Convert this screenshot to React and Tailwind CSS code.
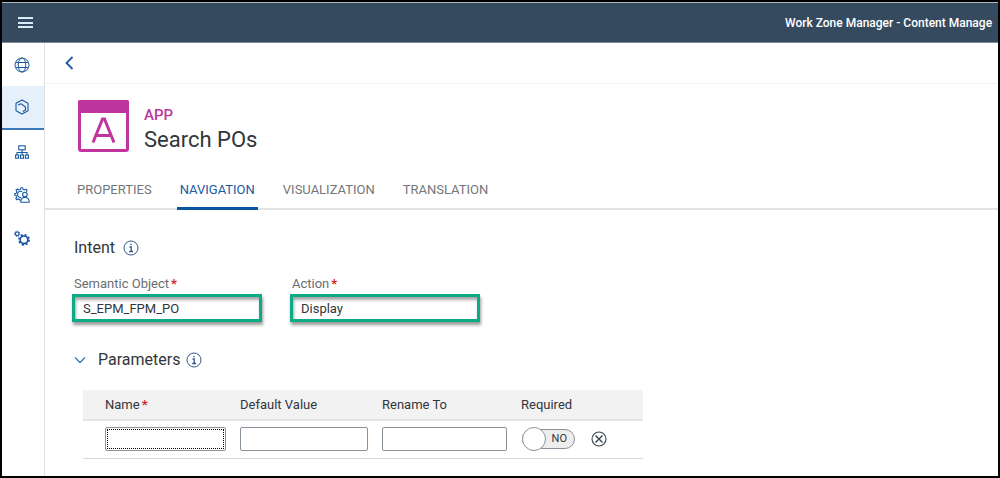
import React, { useState } from "react";

function MenuIcon() {
  return (
    <svg width="15" height="13" viewBox="0 0 15 13" fill="#d9edf7" aria-hidden="true">
      <rect y="1" width="15" height="2" />
      <rect y="6" width="15" height="2" />
      <rect y="10" width="15" height="2" />
    </svg>
  );
}

function GlobeIcon() {
  return (
    <svg width="16" height="16" viewBox="0 0 16 16" fill="none" stroke="#1b5aa3" strokeWidth="1" aria-hidden="true">
      <circle cx="8" cy="8" r="7" />
      <ellipse cx="8" cy="8" rx="3.8" ry="7" />
      <path d="M1.8 5.5h12.4M1.8 10.500h12.4" />
    </svg>
  );
}

function ProductIcon() {
  return (
    <svg width="16" height="16" viewBox="0 0 16 16" fill="none" stroke="#1b5aa3" strokeWidth="1.1" strokeLinejoin="round" aria-hidden="true">
      <path d="M8 1l6 3.3v7.4L8 15l-6-3.3V4.3z" />
      <path d="M4 6l3-1.200L11.500 8v3L8.800 12.500" />
    </svg>
  );
}

function OrgIcon() {
  return (
    <svg width="16" height="16" viewBox="0 0 16 16" fill="none" stroke="#1b5aa3" strokeWidth="1.1" aria-hidden="true">
      <rect x="4.8" y="1.8" width="6.4" height="4" />
      <path d="M8 5.8v5M3 11V8.5h10V11" />
      <rect x="1.6" y="11" width="3" height="3.2" />
      <rect x="6.5" y="11" width="3" height="3.2" />
      <rect x="11.4" y="11" width="3" height="3.2" />
    </svg>
  );
}

function UserSettingsIcon() {
  return (
    <svg width="16" height="16" viewBox="0 0 16 16" fill="none" stroke="#1b5aa3" strokeWidth="1.1" aria-hidden="true">
      <path d="M6.3 14.2l-.4-1.6-1.6-.7-1.5.8-1-1.3.9-1.4-.6-1.6L.7 8V6.600l1.500-.4.700-1.600-.8-1.500 1.300-1.100 1.500.9 1.500-.6L6.900.7h1.700l.4 1.600 1.500.6 1.500-.8 1.100 1.200-.8 1.400" />
      <path d="M8.200 4.600a3.200 3.200 0 1 0-1 6" />
      <circle cx="10.900" cy="7.600" r="2.300" />
      <path d="M6.800 15.200c0-3.400 1.700-4.700 4.100-4.700s4.300 1.300 4.300 4.700z" />
    </svg>
  );
}

function GearsIcon() {
  return (
    <svg width="16" height="16" viewBox="0 0 16 16" fill="none" stroke="#0f4f9b" aria-hidden="true">
      <circle cx="3.200" cy="3.800" r="1.800" strokeWidth="1.100" />
      <circle cx="3.200" cy="3.800" r="2.700" strokeWidth="0.900" strokeDasharray="1.060 1.060" />
      <circle cx="10" cy="9.800" r="3.800" strokeWidth="1.600" />
      <circle cx="10" cy="9.800" r="5.100" strokeWidth="1.600" strokeDasharray="2 2.005" />
    </svg>
  );
}

function InfoIcon() {
  return (
    <svg width="16" height="16" viewBox="0 0 16 16" fill="none" stroke="#31568a" strokeWidth="1" aria-hidden="true">
      <circle cx="8" cy="8" r="7" />
      <path d="M6.500 7H8.200v4.500M6.200 11.500h3.800" strokeWidth="1.300" />
      <rect x="7.300" y="3.800" width="1.400" height="1.400" fill="#31568a" stroke="none" />
    </svg>
  );
}

function AppTile() {
  return (
    <svg width="51" height="52" viewBox="0 0 51 52" aria-hidden="true">
      <rect x="1.500" y="1.500" width="48" height="49" rx="1.500" fill="#fff" stroke="#bf359e" strokeWidth="3" />
      <rect width="51" height="13" rx="2" fill="#bf359e" />
      <path d="M15 42.500L24.500 19h2L36 42.500M18 35.500h15" fill="none" stroke="#bf359e" strokeWidth="3" />
    </svg>
  );
}

const navItems = [
  { label: "Sites", icon: <GlobeIcon /> },
  { label: "Content", icon: <ProductIcon />, active: true },
  { label: "Channels", icon: <OrgIcon /> },
  { label: "User settings", icon: <UserSettingsIcon /> },
  { label: "Settings", icon: <GearsIcon /> },
];

const tabs = ["PROPERTIES", "NAVIGATION", "VISUALIZATION", "TRANSLATION"];

function Star() {
  return <span className="ml-0.5 font-bold text-[#d0242c]">*</span>;
}

function Field({ id, label, value }) {
  return (
    <div className="w-[190px]">
      <label htmlFor={id} className="block pl-0.5 text-[13px] leading-5 text-[#6a6d70]">
        {label}
        <Star />
      </label>
      <input
        id={id}
        defaultValue={value}
        className="block h-7 w-full border-[3px] border-[#0cab86] bg-white px-2 text-[13px] text-[#32363a] shadow-[1px_3px_3px_rgba(0,0,0,0.4),inset_1px_3px_3px_rgba(0,0,0,0.35)] outline-none"
      />
    </div>
  );
}

function CellInput({ label, focused }) {
  return (
    <input
      aria-label={label}
      className={
        focused
          ? "block h-6 w-full rounded-xs border border-[#89919a] bg-white outline-1 -outline-offset-3 outline-dotted outline-black"
          : "block h-6 w-full rounded-xs border border-[#89919a] bg-white outline-none"
      }
    />
  );
}

export default function App() {
  const [tab, setTab] = useState("NAVIGATION");
  const [required, setRequired] = useState(false);

  return (
    <div className="flex min-h-screen flex-col border-2 border-black bg-white font-['Roboto','Liberation_Sans',sans-serif] text-[#32363a]">
      <header className="flex h-[41px] items-center justify-between border-t border-b border-t-[#b3bac2] border-b-[#7b8b9b] bg-[#354a5f] pl-4">
        <button aria-label="Menu">
          <MenuIcon />
        </button>
        <h1 className="w-[213px] text-xs font-medium whitespace-nowrap text-white">
          Work Zone Manager - Content Manage
        </h1>
      </header>

      <div className="flex flex-1">
        <nav className="w-[43px] shrink-0 border-r border-[#dfe1e4]">
          {navItems.map((item) => (
            <a
              key={item.label}
              href="#"
              aria-label={item.label}
              className={
                item.active
                  ? "flex h-11 items-center justify-center border-b-2 border-[#3c78b8] bg-[#e5f0fa] pr-0.5"
                  : "flex h-[43px] items-center justify-center pr-0.5"
              }
            >
              {item.icon}
            </a>
          ))}
        </nav>

        <main className="min-w-0 flex-1">
          <div className="flex h-[41px] items-center border-b border-[#f3f3f3] pl-5">
            <button aria-label="Back">
              <svg width="9" height="14" viewBox="0 0 9 14" fill="none" stroke="#1b5aa3" strokeWidth="1.800" aria-hidden="true">
                <path d="M7.500 1L1.500 7l6 6" />
              </svg>
            </button>
          </div>

          <div className="flex items-start gap-[15px] pt-4 pl-[33px]">
            <AppTile />
            <div className="pt-[5px]">
              <p className="text-[15px] leading-5 font-medium text-[#bf359e]">APP</p>
              <h2 className="text-[22px] leading-[30px]">Search POs</h2>
            </div>
          </div>

          <div role="tablist" className="mt-4 flex gap-[22px] border-b-2 border-[#e2e3e4] pl-[29px] text-[13px]">
            {tabs.map((name) => (
              <button
                key={name}
                role="tab"
                aria-selected={tab === name}
                onClick={() => setTab(name)}
                className={
                  tab === name
                    ? "-mb-0.5 h-[39px] border-b-3 border-[#0854a0] px-[3px] pt-0.5 text-[#1b5aa3]"
                    : "-mb-0.5 h-[39px] border-b-3 border-transparent px-[3px] pt-0.5 text-[#74777a]"
                }
              >
                {name}
              </button>
            ))}
          </div>

          <section className="pt-[26px] pl-[27px]">
            <h3 className="flex items-center gap-2 pl-0.5 text-base leading-6">
              Intent
              <InfoIcon />
            </h3>
            <div className="mt-3.5 flex gap-7">
              <Field id="semantic-object" label="Semantic Object" value="S_EPM_FPM_PO" />
              <Field id="action" label="Action" value="Display" />
            </div>
          </section>

          <section className="pt-[26px] pl-[29px]">
            <h3 className="flex items-center text-base leading-6">
              <button aria-label="Collapse parameters" className="mr-3">
                <svg width="12" height="8" viewBox="0 0 12 8" fill="none" stroke="#3b78b5" strokeWidth="1.300" aria-hidden="true">
                  <path d="M1 1.500l5 5 5-5" />
                </svg>
              </button>
              Parameters
              <span className="ml-1.5">
                <InfoIcon />
              </span>
            </h3>
            <table className="mt-[18px] ml-[9px] w-[560px] table-fixed border-collapse text-left text-[13px]">
              <colgroup>
                <col className="w-[150px]" />
                <col className="w-[141px]" />
                <col className="w-[139px]" />
                <col className="w-[62px]" />
                <col />
              </colgroup>
              <thead>
                <tr className="h-[30px] border-b-2 border-[#e5e5e5] bg-[#f2f2f2]">
                  <th className="pl-[22px] font-normal">
                    Name
                    <Star />
                  </th>
                  <th className="pl-[7px] font-normal">Default Value</th>
                  <th className="pl-2 font-normal">Rename To</th>
                  <th className="pl-2 font-normal">Required</th>
                  <th aria-label="Remove" />
                </tr>
              </thead>
              <tbody>
                <tr className="h-[38px] border-b border-[#d9d9d9]">
                  <td className="pr-[7px] pl-[22px]">
                    <CellInput label="Name" focused />
                  </td>
                  <td className="pr-[6px] pl-[7px]">
                    <CellInput label="Default Value" />
                  </td>
                  <td className="pr-[6px] pl-2">
                    <CellInput label="Rename To" />
                  </td>
                  <td className="pl-[9px]">
                    <label className="relative flex h-6 w-[53px] items-center">
                      <input
                        type="checkbox"
                        role="switch"
                        aria-label="Required"
                        checked={required}
                        onChange={() => setRequired(!required)}
                        className="peer absolute inset-0 m-0 appearance-none"
                      />
                      <span className="flex h-5 w-full items-center justify-end rounded-full border border-[#89919a] bg-[#ededed] pr-[7px] text-[11px] peer-checked:justify-start peer-checked:pl-2">
                        {required ? "YES" : "NO"}
                      </span>
                      <span className="absolute top-0 left-0 size-6 rounded-full border border-[#89919a] bg-white peer-checked:right-0 peer-checked:left-auto" />
                    </label>
                  </td>
                  <td className="pl-4">
                    <button aria-label="Delete parameter" className="block">
                      <svg width="16" height="16" viewBox="0 0 16 16" fill="none" stroke="#32444f" strokeWidth="1.100" aria-hidden="true">
                        <circle cx="8" cy="8" r="7" />
                        <path d="M4.500 4.500l7 7M11.500 4.500l-7 7" strokeWidth="1.400" />
                      </svg>
                    </button>
                  </td>
                </tr>
              </tbody>
            </table>
          </section>
        </main>
      </div>
    </div>
  );
}
